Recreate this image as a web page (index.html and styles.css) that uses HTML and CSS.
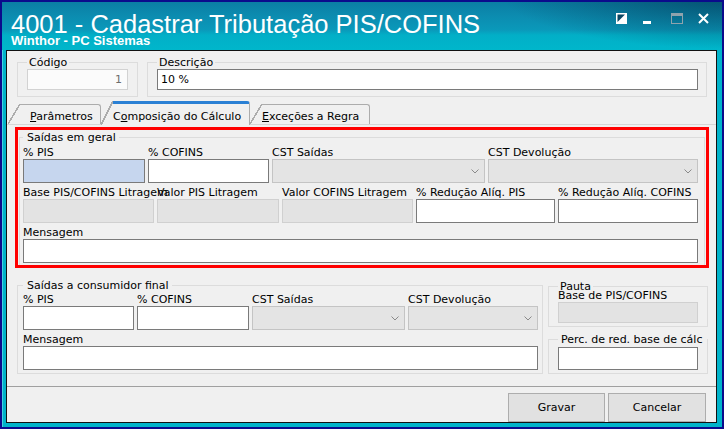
FILE: index.html
```html
<!DOCTYPE html>
<html lang="pt-BR">
<head>
    <meta charset="UTF-8">
    <title>4001 - Cadastrar Tributação PIS/COFINS</title>
    <link rel="stylesheet" href="styles.css">
</head>
<body>
    <div class="window">
        <div class="titlebar">
            <div class="caption">
                <div class="caption-title">4001 - Cadastrar Tributação PIS/COFINS</div>
                <div class="caption-sub">Winthor - PC Sistemas</div>
            </div>
            <!-- window buttons: dock, minimize, maximize (disabled), close -->
            <svg class="caption-buttons" width="94" height="11" viewBox="0 0 94 11">
                <rect x="0.5" y="0.5" width="10" height="10" fill="#fff" stroke="#fff"/>
                <polygon points="1.5,1.5 9,1.5 1.5,9" fill="#0a4763"/>
                <rect x="27" y="8" width="8" height="3" fill="#fff"/>
                <rect x="55.5" y="0.5" width="11" height="10" fill="none" stroke="#8fa3ad"/>
                <rect x="56" y="1" width="10" height="2" fill="#8fa3ad"/>
                <path d="M83 1 L92 10 M92 1 L83 10" stroke="#fff" stroke-width="2"/>
            </svg>
        </div>

        <div class="client">
            <div class="head">
                <fieldset class="box box-codigo">
                    <legend>Código</legend>
                    <div class="edit edit-ro">1</div>
                </fieldset>
                <fieldset class="box box-descricao">
                    <legend>Descrição</legend>
                    <div class="edit edit-short">10 %</div>
                </fieldset>
            </div>

            <div class="tabs">
                <div class="tab tab-param"><u>P</u>arâmetros</div>
                <div class="tab tab-comp active">C<u>o</u>mposição do Cálculo</div>
                <div class="tab tab-exc"><u>E</u>xceções a Regra</div>
            </div>

            <div class="sheet">
                <div class="highlight">
                    <fieldset class="box box-geral">
                        <legend>Saídas em geral</legend>
                        <div class="row cols-geral-1">
                            <div class="field"><label>% PIS</label><div class="edit focus"></div></div>
                            <div class="field"><label>% COFINS</label><div class="edit"></div></div>
                            <div class="field"><label>CST Saídas</label><div class="edit combo"><svg class="chevron" width="8" height="5" viewBox="0 0 8 5"><polyline points="0.5,0.5 4,4 7.5,0.5" fill="none" stroke="#8a8a8a"/></svg></div></div>
                            <div class="field"><label>CST Devolução</label><div class="edit combo"><svg class="chevron" width="8" height="5" viewBox="0 0 8 5"><polyline points="0.5,0.5 4,4 7.5,0.5" fill="none" stroke="#8a8a8a"/></svg></div></div>
                        </div>
                        <div class="row cols-geral-2">
                            <div class="field"><label>Base PIS/COFINS Litragem</label><div class="edit off"></div></div>
                            <div class="field"><label>Valor PIS Litragem</label><div class="edit off"></div></div>
                            <div class="field"><label>Valor COFINS Litragem</label><div class="edit off"></div></div>
                            <div class="field"><label>% Redução Alíq. PIS</label><div class="edit"></div></div>
                            <div class="field"><label>% Redução Alíq. COFINS</label><div class="edit"></div></div>
                        </div>
                        <div class="row">
                            <div class="field"><label>Mensagem</label><div class="edit"></div></div>
                        </div>
                    </fieldset>
                </div>

                <div class="lower">
                    <fieldset class="box box-consumidor">
                        <legend>Saídas a consumidor final</legend>
                        <div class="row cols-cons-1">
                            <div class="field"><label>% PIS</label><div class="edit"></div></div>
                            <div class="field"><label>% COFINS</label><div class="edit"></div></div>
                            <div class="field"><label>CST Saídas</label><div class="edit combo"><svg class="chevron" width="8" height="5" viewBox="0 0 8 5"><polyline points="0.5,0.5 4,4 7.5,0.5" fill="none" stroke="#8a8a8a"/></svg></div></div>
                            <div class="field"><label>CST Devolução</label><div class="edit combo"><svg class="chevron" width="8" height="5" viewBox="0 0 8 5"><polyline points="0.5,0.5 4,4 7.5,0.5" fill="none" stroke="#8a8a8a"/></svg></div></div>
                        </div>
                        <div class="row">
                            <div class="field"><label>Mensagem</label><div class="edit"></div></div>
                        </div>
                    </fieldset>

                    <div class="side">
                        <fieldset class="box box-pauta">
                            <legend>Pauta</legend>
                            <label class="pauta-label">Base de PIS/COFINS</label>
                            <div class="edit off edit-short"></div>
                        </fieldset>
                        <fieldset class="box box-perc">
                            <legend>Perc. de red. base de cálc</legend>
                            <div class="edit edit-perc"></div>
                        </fieldset>
                    </div>
                </div>
            </div>

            <div class="footer">
                <button class="btn btn-gravar">Gravar</button>
                <button class="btn btn-cancelar">Cancelar</button>
            </div>
        </div>
    </div>
</body>
</html>
```

FILE: styles.css
```css
body {
    margin: 0;
    background-color: #0b0b8c;
    font-family: "DejaVu Sans", sans-serif;
    font-size: 11px;
    color: #000;
}

.window {
    width: 724px;
    height: 429px;
    box-sizing: border-box;
    border: 2px solid #0b0b8c;
    padding: 0 5px 4px 4px;
    background-color: #00b3ca;
    box-shadow: inset 1px 1px 0 #45cfe4;
    display: flex;
    flex-direction: column;
}

/* caption */

.titlebar {
    height: 48px;
    flex: none;
    margin: 0 -5px 0 -4px;
    padding: 0 12px 0 9px;
    display: flex;
    justify-content: space-between;
    align-items: flex-start;
    color: #fff;
    font-family: "Liberation Sans", Arial, sans-serif;
    background:
        radial-gradient(ellipse 230px 55px at 730px -8px, rgba(2, 62, 90, 0.75), rgba(2, 62, 90, 0) 100%),
        linear-gradient(180deg, #0b7ea4 0, #0c8cb0 14px, #0a99ba 28px, #02afc7 33px, #00b6cb 48px);
}

.caption-title {
    font-size: 25.5px;
    line-height: 26px;
    margin-top: 9px;
    white-space: nowrap;
}

.caption-sub {
    font-size: 13px;
    font-weight: bold;
    line-height: 13px;
    margin-top: -3px;
    white-space: nowrap;
}

.caption-buttons {
    display: block;
    margin-top: 11px;
}

/* client area */

.client {
    flex: 1;
    border: 1px solid #111;
    background-color: #f0f0f0;
    display: flex;
    flex-direction: column;
}

.box {
    margin: 0;
    box-sizing: border-box;
    min-width: 0;
    border: 1px solid #dcdcdc;
}

.box legend {
    padding: 0 2px;
    line-height: 13px;
    white-space: nowrap;
}

.head {
    display: flex;
    gap: 9px;
    padding: 5px 9px 0 10px;
}

.box-codigo {
    width: 121px;
    padding: 0 9px 6px 9px;
}

.box-descricao {
    flex: 1;
    padding: 0 8px 6px 9px;
}

.edit {
    box-sizing: border-box;
    height: 24px;
    border: 1px solid #7a7a7a;
    background-color: #fff;
    line-height: 19px;
    padding: 0 3px;
    white-space: nowrap;
}

.edit-short {
    height: 21px;
}

.edit-ro {
    height: 21px;
    border-color: #d2d2d2;
    background-color: #fbfbfb;
    color: #6d6d6d;
    text-align: right;
    padding-right: 5px;
}

.edit.focus {
    background-color: #c6d6ee;
}

.edit.off {
    background-color: #e3e3e3;
    border-color: #d0d0d0;
}

.edit.combo {
    background-color: #e4e4e4;
    border-color: #c4c4c4;
    display: flex;
    align-items: center;
    justify-content: flex-end;
    padding-right: 5px;
}

.chevron {
    display: block;
}

/* tabs */

.tabs {
    display: flex;
    align-items: flex-end;
    height: 23px;
    margin-top: 4px;
    padding-left: 13px;
    position: relative;
    z-index: 1;
}

.tab {
    position: relative;
    box-sizing: border-box;
    height: 20px;
    padding-top: 5px;
    border-top: 1px solid #acacac;
    border-right: 1px solid #acacac;
    border-top-right-radius: 3px;
    background-color: #f0f0f0;
    line-height: 13px;
    white-space: nowrap;
}

.tab::before {
    content: "";
    position: absolute;
    left: -12px;
    top: -1px;
    bottom: 0;
    width: 12px;
    background: linear-gradient(to top left,
        #f0f0f0 calc(50% - 0.7px), #acacac calc(50% - 0.7px),
        #acacac calc(50% + 0.7px), transparent calc(50% + 0.7px));
}

.tab-param {
    width: 81px;
    padding-left: 10px;
}

.tab-comp {
    width: 137px;
    margin-left: 12px;
}

.tab-exc {
    width: 108px;
    margin-left: 12px;
}

.tab.active {
    height: 24px;
    margin-bottom: -1px;
    padding-top: 6px;
    border-top: 3px solid #2a80d4;
}

.tab.active::before {
    top: -3px;
}

.sheet {
    border-top: 1px solid #d6d6d6;
    border-bottom: 1px solid #a0a0a0;
    padding: 2px 7px 12px 8px;
}

.highlight {
    border: 3px solid #f00;
}

.box-geral {
    margin: 1px 1px 0 1px;
    border-bottom: none;
    padding: 2px 6px 2px 3px;
}

.box-geral legend,
.box-consumidor legend {
    padding: 0 3px 0 4px;
}

.row {
    display: grid;
    column-gap: 3px;
}

.row + .row {
    margin-top: 3px;
}

.cols-geral-1 {
    grid-template-columns: 122px 121px 213px 210px;
}

.cols-geral-2 {
    grid-template-columns: 131px 122px 131px 139px 140px;
}

.cols-cons-1 {
    grid-template-columns: 111px 112px 153px 130px;
}

.field label,
.pauta-label {
    display: block;
    line-height: 13px;
    white-space: nowrap;
}

.lower {
    display: flex;
    align-items: flex-start;
    margin-top: 11px;
}

.box-consumidor {
    width: 526px;
    margin-left: 2px;
    padding: 1px 4px 3px 5px;
}

.side {
    width: 160px;
    margin-left: 5px;
    margin-top: 1px;
}

.box-pauta {
    padding: 0 9px 3px 9px;
}

.pauta-label {
    margin-top: -4px;
}

.box-perc {
    margin-top: 6px;
    padding: 0 9px 3px 9px;
}

.box-perc legend {
    width: 149px;
    box-sizing: border-box;
    padding: 0 0 0 3px;
}

.edit-perc {
    height: 23px;
    margin-top: 1px;
}

/* buttons */

.footer {
    margin-top: auto;
    display: flex;
    justify-content: flex-end;
    gap: 3px;
    padding: 6px 10px 0 0;
    height: 35px;
    box-sizing: border-box;
}

.btn {
    height: 29px;
    margin: 0;
    padding: 0;
    border: 1px solid #adadad;
    background-color: #e1e1e1;
    font-family: "DejaVu Sans", sans-serif;
    font-size: 11px;
    color: #000;
}

.btn-gravar {
    width: 97px;
}

.btn-cancelar {
    width: 98px;
}
```
